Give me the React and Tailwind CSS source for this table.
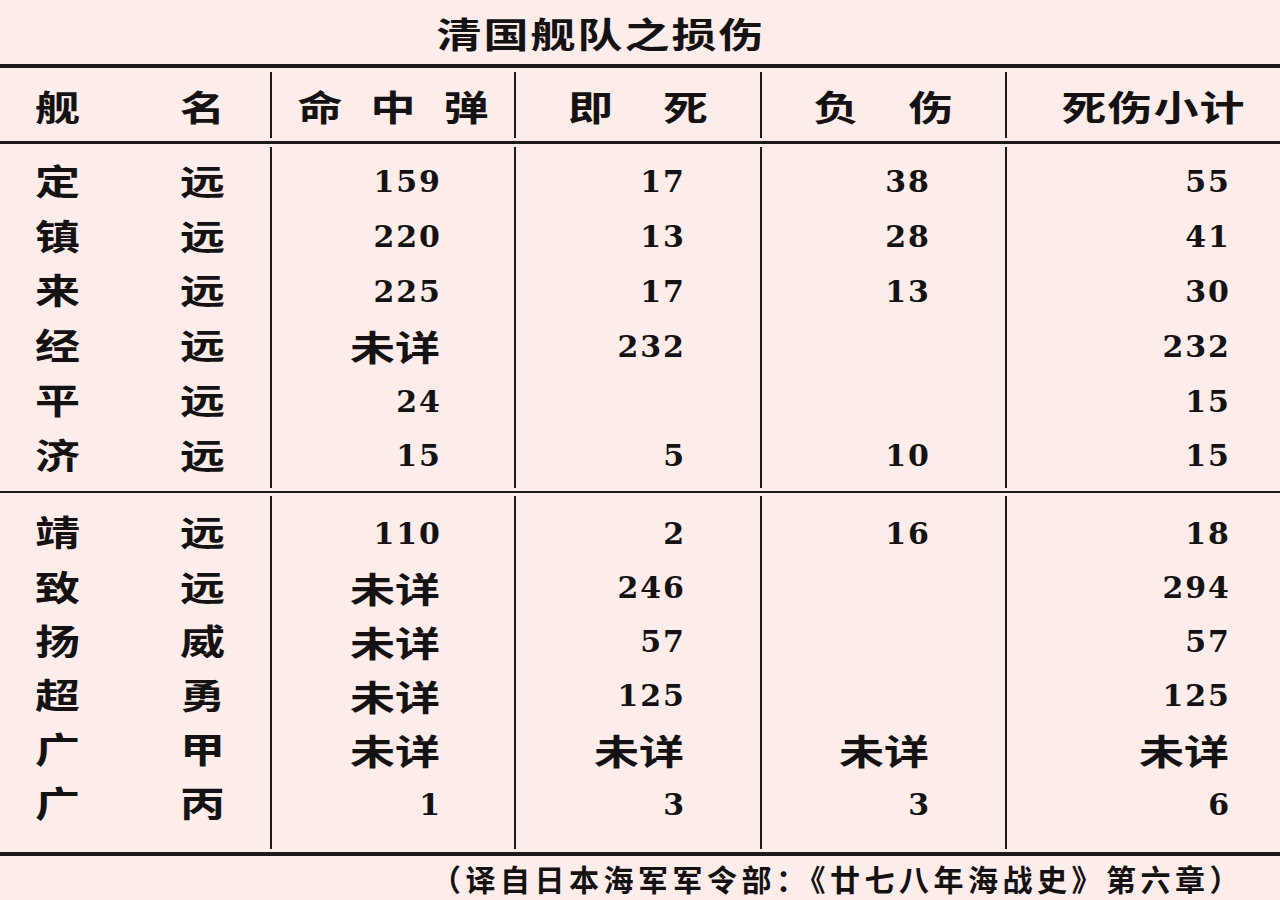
import React from 'react';

const ROWS_TOP = [
  ['定', '远', '159', '17', '38', '55'],
  ['镇', '远', '220', '13', '28', '41'],
  ['来', '远', '225', '17', '13', '30'],
  ['经', '远', '未详', '232', '', '232'],
  ['平', '远', '24', '', '', '15'],
  ['济', '远', '15', '5', '10', '15'],
];

const ROWS_BOTTOM = [
  ['靖', '远', '110', '2', '16', '18'],
  ['致', '远', '未详', '246', '', '294'],
  ['扬', '威', '未详', '57', '', '57'],
  ['超', '勇', '未详', '125', '', '125'],
  ['广', '甲', '未详', '未详', '未详', '未详'],
  ['广', '丙', '1', '3', '3', '6'],
];

// data columns after the ship name: width + right padding
const COLS = [
  { w: 'w-[244px]', pr: 'pr-[74px]' },
  { w: 'w-[246px]', pr: 'pr-[76px]' },
  { w: 'w-[245px]', pr: 'pr-[76px]' },
  { w: 'flex-1', pr: 'pr-[51px]' },
];

const cjk = "font-['Noto_Sans_CJK_SC',sans-serif]";
const num = "font-['DejaVu_Serif',serif]";

const Han = ({ children, className = '' }) => (
  <span className={`inline-block scale-y-[0.78] text-[45px] leading-none font-bold ${cjk} ${className}`}>{children}</span>
);

const Value = ({ v }) => {
  if (!v) return null;
  if (/^\d+$/.test(v)) {
    return <span className={`${num} font-bold text-[30px] leading-none tracking-[2px] -mr-[2px] translate-y-[1px]`}>{v}</span>;
  }
  return <Han>{v}</Han>;
};

const Rule = ({ h }) => <div className={`${h} w-full bg-[#1c1a1a]`} />;

const Section = ({ rows, rowH, colPad }) => (
  <div className="flex py-[3px]">
    <div className={`w-[270px] flex flex-col ${colPad}`}>
      {rows.map((r, i) => (
        <div key={i} className={`${rowH} flex items-center pl-[35px] -translate-y-[2px]`}>
          <Han className="w-[145px]">{r[0]}</Han>
          <Han>{r[1]}</Han>
        </div>
      ))}
    </div>
    {COLS.map((c, ci) => (
      <div key={ci} className={`${c.w} flex flex-col border-l-2 border-[#1c1a1a] ${colPad}`}>
        {rows.map((r, i) => (
          <div key={i} className={`${rowH} flex items-center justify-end ${c.pr}`}>
            <Value v={r[ci + 2]} />
          </div>
        ))}
      </div>
    ))}
  </div>
);

export default function App() {
  return (
    <div className="w-[1280px] h-[900px] overflow-hidden bg-[#fcecea] text-[#141212]">
      <div className="h-[64px] flex items-center justify-center pr-[78px]">
        <Han className="tracking-[2px]">清国舰队之损伤</Han>
      </div>

      <Rule h="h-[4px]" />

      {/* header */}
      <div className="flex pt-[4px] pb-[3px]">
        <div className="w-[270px] h-[66px] flex items-center pl-[35px]">
          <Han className="w-[145px]">舰</Han>
          <Han>名</Han>
        </div>
        <div className="w-[244px] h-[66px] flex items-center justify-center gap-[28px] border-l-2 border-[#1c1a1a]">
          <Han>命</Han><Han>中</Han><Han>弹</Han>
        </div>
        <div className="w-[246px] h-[66px] flex items-center justify-center gap-[50px] border-l-2 border-[#1c1a1a]">
          <Han>即</Han><Han>死</Han>
        </div>
        <div className="w-[245px] h-[66px] flex items-center justify-center gap-[50px] border-l-2 border-[#1c1a1a]">
          <Han>负</Han><Han>伤</Han>
        </div>
        <div className="flex-1 h-[66px] flex items-center justify-center pl-[20px] border-l-2 border-[#1c1a1a]">
          <Han className="tracking-[1px]">死伤小计</Han>
        </div>
      </div>

      <Rule h="h-[3px]" />
      <Section rows={ROWS_TOP} rowH="h-[54.8px]" colPad="pt-[7px] pb-[5px]" />
      <Rule h="h-[2px]" />
      <Section rows={ROWS_BOTTOM} rowH="h-[54.2px]" colPad="pt-[10px] pb-[18px]" />
      <Rule h="h-[4px]" />

      <div className="h-[44px] flex items-center justify-end pr-[36px]">
        <span className={`${cjk} font-bold text-[30px] leading-none tracking-[4.5px]`}>
          （译自日本海军军令部：《廿七八年海战史》第六章）
        </span>
      </div>
    </div>
  );
}
